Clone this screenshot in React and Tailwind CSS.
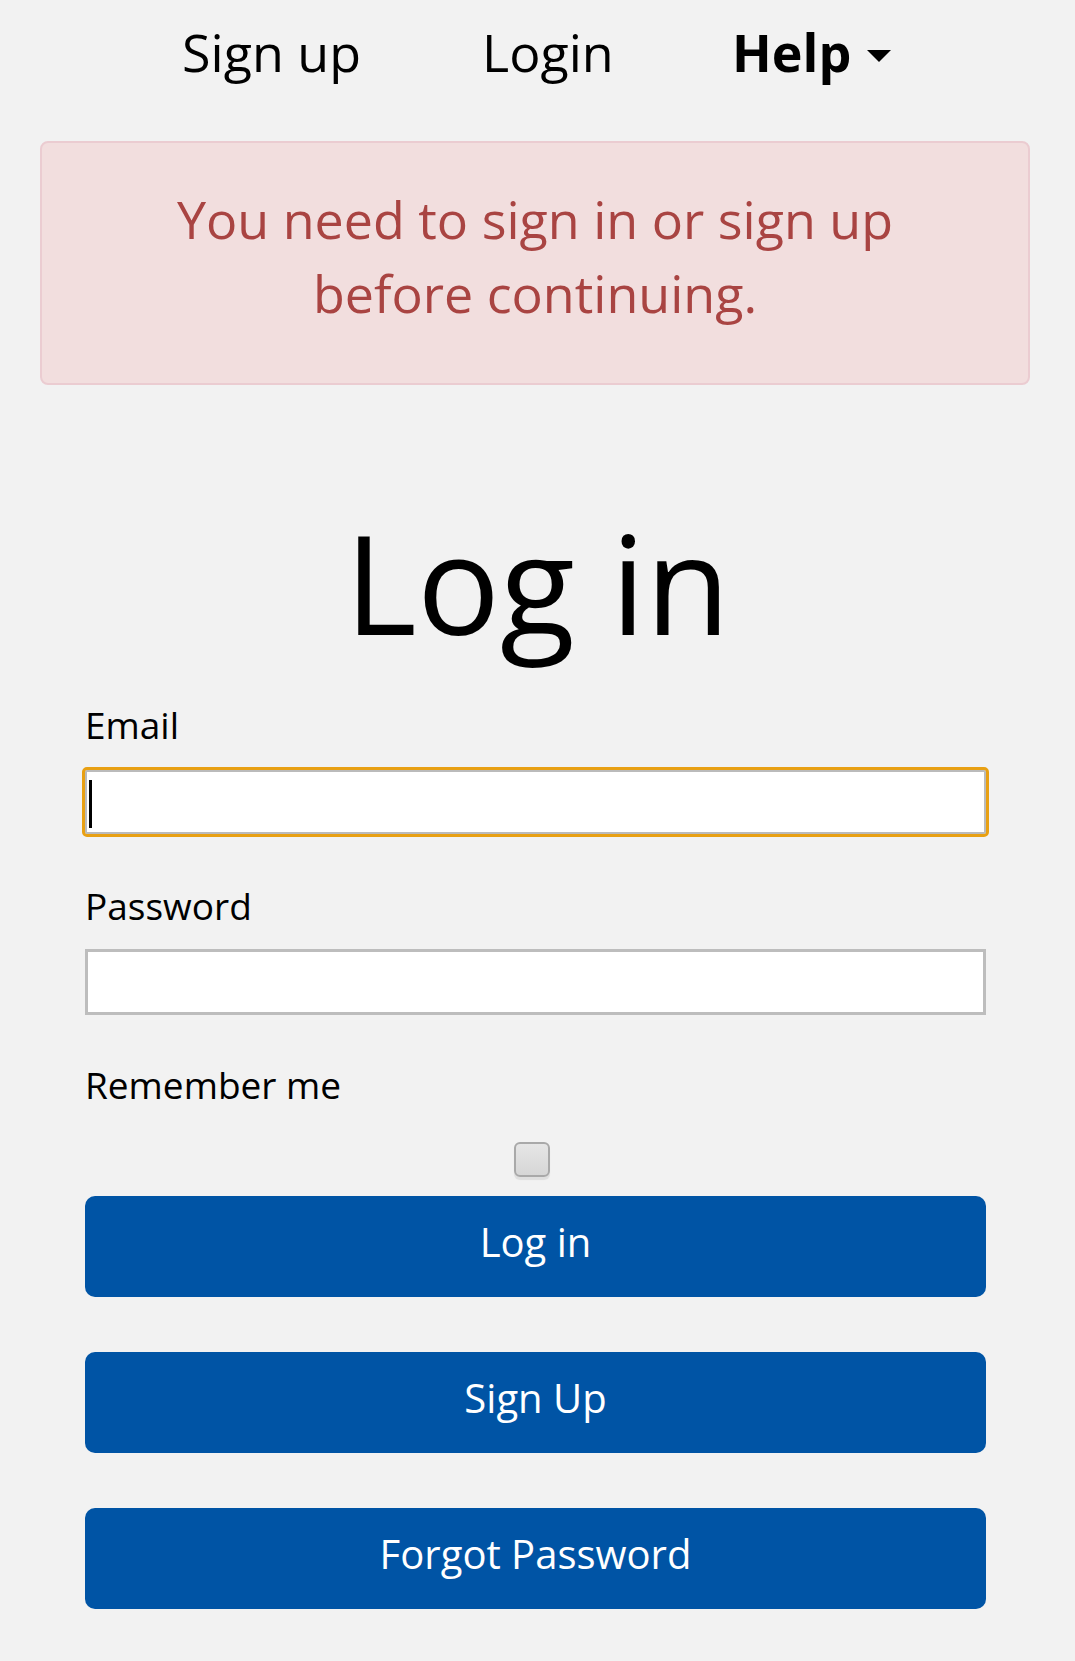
import { useState } from 'react';

const NavBar = () => (
  <nav className="flex pt-[20px] pl-[182px] text-[52px] leading-[64px] text-black">
    <a href="#" className="w-[300px]">Sign up</a>
    <a href="#" className="w-[250px]">Login</a>
    <a href="#" className="flex items-center font-bold">
      Help
      <svg width="24" height="12" viewBox="0 0 24 12" className="ml-[16px] mt-[8px]">
        <path d="M0 0H24L12 12Z" fill="#000" />
      </svg>
    </a>
  </nav>
);

const Field = ({ label, type, focused, className }) => (
  <div className={className}>
    <label className="block text-[37px] leading-[44px] text-black">{label}</label>
    {focused ? (
      <div className="relative mt-[23px]">
        <input
          type={type}
          className="block h-[64px] w-full rounded-[2px] border-2 border-[#bbb] bg-white px-[4px] outline-[3px] outline-[#e8a013] outline-solid"
        />
        {/* caret, as seen in the focused field */}
        <span className="absolute left-[4px] top-[10px] h-[48px] w-[3px] bg-black" />
      </div>
    ) : (
      <input
        type={type}
        className="mt-[21px] block h-[66px] w-full border-[3px] border-[#bdbdbd] bg-white px-[4px] outline-none"
      />
    )}
  </div>
);

const FormButton = ({ children, className }) => (
  <button
    type="button"
    className={`flex h-[101px] w-full items-center justify-center rounded-[10px] bg-[#0054a5] pb-[10px] text-[40px] text-white ${className}`}
  >
    {children}
  </button>
);

const App = () => {
  const [remember, setRemember] = useState(false);

  return (
    <div className="min-h-[1661px] bg-[#f2f2f2] font-['Open_Sans',sans-serif] pb-[51px]">
      <NavBar />

      <div className="ml-[40px] mt-[57px] w-[990px] rounded-[8px] border-2 border-[#ebccd1] bg-[#f2dede] pt-[39px] pb-[53px] text-center text-[52px] leading-[74px] text-[#a94442]">
        <p>
          You need to sign in or sign up
          <br />
          before continuing.
        </p>
      </div>

      <h1 className="mt-[121px] text-center text-[138px] leading-[150px] text-black">Log in</h1>

      <form className="ml-[85px] w-[901px]">
        <Field label="Email" type="email" focused className="mt-[47px]" />
        <Field label="Password" type="password" className="mt-[50px]" />

        <div className="mt-[48px]">
          <label className="block text-[37px] leading-[44px] text-black">Remember me</label>
          <div className="mt-[35px] flex justify-center pr-[8px]">
            <input
              type="checkbox"
              checked={remember}
              onChange={(e) => setRemember(e.target.checked)}
              className="h-[35px] w-[36px] appearance-none rounded-[6px] border-2 border-[#a9a9a9] bg-gradient-to-b from-[#e6e6e6] to-[#d6d6d6] shadow-[0_3px_1px_rgba(0,0,0,0.08)]"
            />
          </div>
        </div>

        <FormButton className="mt-[19px]">Log in</FormButton>
        <FormButton className="mt-[55px]">Sign Up</FormButton>
        <FormButton className="mt-[55px]">Forgot Password</FormButton>
      </form>
    </div>
  );
};

export default App;
